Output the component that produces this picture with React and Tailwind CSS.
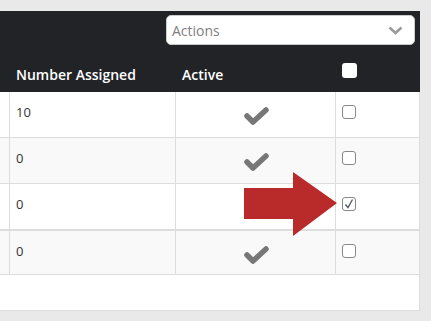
import React from 'react'

const rows = [
  { n: '10', bg: 'bg-white', checked: false, h: 'h-[46px]', b: 'border-b' },
  { n: '0', bg: 'bg-[#f9f9f9]', checked: false, h: 'h-[46px]', b: 'border-b' },
  { n: '0', bg: 'bg-white', checked: true, h: 'h-[47px]', b: 'border-b-2' },
  { n: '0', bg: 'bg-[#f9f9f9]', checked: false, h: 'h-[44px]', b: 'border-b' },
]

function Check() {
  return (
    <svg width="26" height="22" viewBox="0 0 26 22">
      <polyline points="4,11 10,17 23,5" fill="none" stroke="#777" strokeWidth="5.5" strokeLinecap="round" strokeLinejoin="round" />
    </svg>
  )
}

function Box({ checked }) {
  return (
    <div className="w-[14px] h-[14px] rounded-[3px] border border-[#888] bg-white flex items-center justify-center">
      {checked && (
        <svg width="12" height="12" viewBox="0 0 12 12">
          <polyline points="2.5,6.5 5,9.5 9.5,1.5" fill="none" stroke="#556" strokeWidth="1.3" />
        </svg>
      )}
    </div>
  )
}

export default function App() {
  return (
    <div className="w-[431px] h-[321px] bg-[#e9e9e9] pt-[11px] font-['Open_Sans',sans-serif] overflow-hidden">
      <div className="relative w-[420px]">
        <div className="bg-[#212327] h-[81px] flex flex-col">
          <div className="flex justify-end pt-[4px] pr-[5px]">
            <div className="w-[249px] h-[30px] bg-white rounded-[5px] border border-[#ccc] flex items-center justify-between pl-[5px] pr-[11px]">
              <span className="text-[14px] text-[#808080]">Actions</span>
              <svg width="15" height="9" viewBox="0 0 15 9">
                <polyline points="1.5,1.5 7.5,7 13.5,1.5" fill="none" stroke="#999" strokeWidth="2.5" />
              </svg>
            </div>
          </div>
          <div className="flex mt-[18px] text-white text-[14px] leading-[20px] font-semibold">
            <div className="w-[10px]" />
            <div className="w-[166px] pl-[6px] pt-[2px]">Number Assigned</div>
            <div className="w-[160px] pl-[6px] pt-[2px]">Active</div>
            <div className="w-[84px] pl-[6px]">
              <div className="w-[15px] h-[15px] rounded-[3px] bg-white" />
            </div>
          </div>
        </div>
        <div className="bg-white w-[420px] h-[219px] border-b border-r border-[#ddd]">
          {rows.map((r, i) => (
            <div key={i} className={`flex ${r.h} ${r.bg} ${r.b} border-[#ddd]`}>
              <div className="w-[10px] border-r border-[#ddd]" />
              <div className="w-[166px] border-r border-[#ddd] pl-[6px] pt-[11px] text-[13px] leading-[18px] text-[#333]">{r.n}</div>
              <div className="w-[160px] border-r border-[#ddd] flex justify-center pt-[13px]">
                <Check />
              </div>
              <div className="w-[83px] pl-[6px] pt-[13px]">
                <Box checked={r.checked} />
              </div>
            </div>
          ))}
        </div>
        <svg className="absolute left-[244px] top-[161px]" width="94" height="65" viewBox="0 0 94 65">
          <polygon points="0,16 49,16 49,0 93,31 49,64 49,47 0,47" fill="#b92a2a" />
        </svg>
      </div>
    </div>
  )
}
